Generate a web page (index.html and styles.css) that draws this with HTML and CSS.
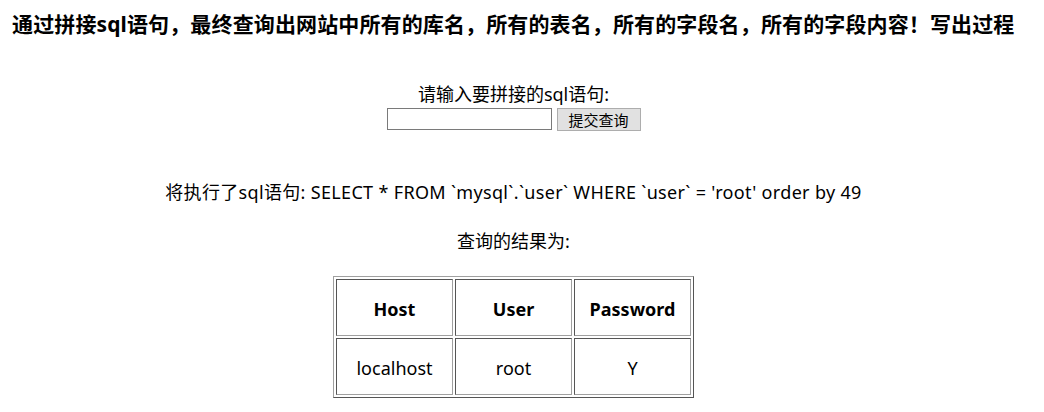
FILE: index.html
```html
<!DOCTYPE html>
<html lang="zh-CN">
<head>
<meta charset="utf-8">
<title>sql注入</title>
<link rel="stylesheet" href="styles.css">
</head>
<body>
<h3 class="title">通过拼接sql语句，最终查询出网站中所有的库名，所有的表名，所有的字段名，所有的字段内容！写出过程</h3>
<form class="query-form">
  <div class="query-label">请输入要拼接的sql语句:</div>
  <div class="query-row">
    <input class="query-input" type="text" name="sql">
    <button class="query-btn" type="button">提交查询</button>
  </div>
</form>
<p class="executed">将执行了sql语句: SELECT * FROM `mysql`.`user` WHERE `user` = 'root' order by 49</p>
<p class="result-label">查询的结果为:</p>
<table class="result">
  <tr><th>Host</th><th>User</th><th>Password</th></tr>
  <tr><td>localhost</td><td>root</td><td>Y</td></tr>
</table>
</body>
</html>
```
FILE: styles.css
```css
html, body {
  margin: 0;
  background: #fff;
}
body {
  padding: 10px 29px 10px 12px;
  font-family: "Noto Sans", "Noto Sans CJK SC", sans-serif;
  font-size: 18px;
  color: #000;
  text-align: center;
}
.title {
  margin: 0;
  font-size: 21px;
  line-height: 28px;
  font-weight: bold;
  letter-spacing: 0.13px;
  text-align: left;
  white-space: nowrap;
}
.query-form {
  margin: 45px 0 0;
}
.query-label {
  line-height: 22px;
}
.query-row {
  margin-top: 3px;
  display: flex;
  justify-content: center;
  align-items: flex-start;
  gap: 5px;
}
.query-input {
  box-sizing: border-box;
  width: 165px;
  height: 22px;
  margin: 0;
  border: 1px solid #7a7a7a;
  padding: 1px 2px;
  font: inherit;
  font-size: 14px;
}
.query-btn {
  box-sizing: border-box;
  height: 23px;
  width: 84px;
  margin: 0;
  padding: 0 6px;
  border: 1px solid #adadad;
  background: #e1e1e1;
  font-family: "Noto Sans CJK SC", sans-serif;
  font-size: 15px;
  line-height: 20px;
  color: #000;
}
.executed {
  margin: 49px 0 0;
  line-height: 24px;
  letter-spacing: 0.33px;
}
.result-label {
  margin: 25px 0 0;
  line-height: 24px;
}
.result {
  margin: 23px auto 0;
  border-collapse: separate;
  border-spacing: 2px;
  border: 1px solid;
  border-color: #a0a0a0 #555 #555 #a0a0a0;
}
.result th, .result td {
  box-sizing: border-box;
  width: 117px;
  height: 57px;
  padding: 2px 0 0;
  border: 1px solid;
  border-color: #555 #a0a0a0 #a0a0a0 #555;
  text-align: center;
  vertical-align: middle;
}
.result th {
  font-weight: bold;
}
.result td {
  font-weight: normal;
}
```
